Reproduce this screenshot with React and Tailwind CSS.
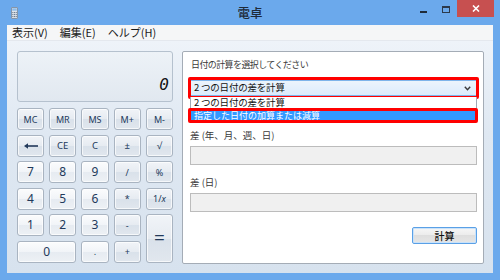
const BTN_LIGHT =
  "bg-[linear-gradient(180deg,#fbfcfd_0%,#f1f4f8_50%,#e6ebf1_50%,#edf1f5_100%)]";
const BTN_DARK =
  "bg-[linear-gradient(180deg,#f1f4f8_0%,#e6ebf1_50%,#d9e1ea_50%,#e1e7ee_100%)]";

function Key({ children, dark, className = "" }) {
  return (
    <div
      className={`flex items-center justify-center rounded-[3px] border border-[#a9b4c1] text-[#22395a] font-['Noto_Sans','Open_Sans',sans-serif] leading-none shadow-[inset_0_0_0_1px_rgba(255,255,255,0.7)] ${
        dark ? BTN_DARK : BTN_LIGHT
      } ${className}`}
    >
      {children}
    </div>
  );
}

function CalcIcon() {
  return (
    <svg width="7" height="12" viewBox="0 0 7 12">
      <rect x="0.5" y="0.5" width="6" height="11" rx="0.5" fill="#dfe4ea" stroke="#8595a8" />
      <rect x="1.2" y="1.3" width="4.6" height="2.4" fill="#8fbde9" />
      {[5, 7, 9].map((y) =>
        [1.3, 3, 4.7].map((x) => (
          <rect key={`${x}-${y}`} x={x} y={y} width="1.1" height="1.1" fill="#6d7f95" />
        ))
      )}
    </svg>
  );
}

export default function App() {
  const jp = "font-['Noto_Sans_CJK_JP','Noto_Sans',sans-serif]";
  return (
    <div className={`w-[500px] h-[280px] bg-[#6ba9ec] flex flex-col overflow-hidden ${jp}`}>
      {/* title bar */}
      <div className="h-[25px] grid grid-cols-[1fr_auto_1fr] shrink-0">
        <div className="pl-[11px] pt-[7px]">
          <CalcIcon />
        </div>
        <div className="text-[12.5px] leading-[26px] text-[#1e2a38] font-medium">電卓</div>
        <div className="flex justify-end items-start pr-[6px]">
          <div className="mt-[11px] w-[7px] h-[2px] bg-[#1f2b3a]" />
          <div className="ml-[15px] mt-[6px] w-[8px] h-[7px] border border-[#2c3a4c] border-t-2" />
          <div className="ml-[7px] w-[37px] h-[17px] bg-[#c75050] flex items-center justify-center">
            <svg width="8" height="7" viewBox="0 0 8 7">
              <path d="M1 0.5 L7 6.5 M7 0.5 L1 6.5" stroke="#ffffff" strokeWidth="1.6" />
            </svg>
          </div>
        </div>
      </div>

      <div className="flex-1 flex flex-col px-[7px] pb-[7px]">
        {/* menu bar */}
        <div className="h-[16px] bg-[#f5f6f7] border-b border-[#e4e8ee] flex items-center gap-[12px] px-[5px] text-[11px] text-[#1a1a1a] leading-none">
          <span>表示(V)</span>
          <span>編集(E)</span>
          <span>ヘルプ(H)</span>
        </div>

        {/* client */}
        <div className="flex-1 flex gap-[9px] pl-[10px] pt-[10px] pr-[9px] pb-[9px] bg-[linear-gradient(180deg,#eef3f9_0%,#dfe8f2_40%,#d7e2ee_100%)]">
          {/* calculator */}
          <div className="w-[156px] flex flex-col">
            <div className="h-[51px] rounded-[3px] border border-[#b5c1ce] bg-[linear-gradient(180deg,#edf2f7_0%,#e1e8f0_100%)] flex items-end justify-end pr-[3px] pb-[8px]">
              <span className="font-['DejaVu_Sans_Mono',monospace] text-[16px] leading-none italic text-[#111]">0</span>
            </div>
            <div className="mt-[6px] grid grid-cols-5 grid-rows-[repeat(6,22px)] gap-x-[5.2px] gap-y-[4.6px]">
              <Key dark className="text-[9px]">MC</Key>
              <Key dark className="text-[9px]">MR</Key>
              <Key dark className="text-[9px]">MS</Key>
              <Key dark className="text-[9px]">M+</Key>
              <Key dark className="text-[9px]">M-</Key>

              <Key dark>
                <svg width="14" height="6" viewBox="0 0 14 6">
                  <path d="M3 3 H14" stroke="#22395a" strokeWidth="1.6" />
                  <path d="M0 3 L4 0.2 L4 5.8 Z" fill="#22395a" />
                </svg>
              </Key>
              <Key dark className="text-[9.5px]">CE</Key>
              <Key dark className="text-[9.5px]">C</Key>
              <Key dark className="text-[9.5px]">±</Key>
              <Key dark className="text-[9.5px]">√</Key>

              <Key className="text-[12px]">7</Key>
              <Key className="text-[12px]">8</Key>
              <Key className="text-[12px]">9</Key>
              <Key dark className="text-[9px]">/</Key>
              <Key dark className="text-[9px]">%</Key>

              <Key className="text-[12px]">4</Key>
              <Key className="text-[12px]">5</Key>
              <Key className="text-[12px]">6</Key>
              <Key dark className="text-[9px]">*</Key>
              <Key dark className="text-[9px] font-['Liberation_Serif',serif]">
                1/<span className="italic">x</span>
              </Key>

              <Key className="text-[12px]">1</Key>
              <Key className="text-[12px]">2</Key>
              <Key className="text-[12px]">3</Key>
              <Key dark className="text-[9px]">-</Key>
              <Key dark className="row-span-2 text-[19px]">=</Key>

              <Key className="col-span-2 text-[12px]">0</Key>
              <Key className="text-[9px]">.</Key>
              <Key dark className="text-[9px]">+</Key>
            </div>
          </div>

          {/* date panel */}
          <div className="flex-1 bg-white border border-[#a4acb6] rounded-[2px] flex flex-col pl-[7px] pr-[6px] pt-[7px]">
            <div className="ml-[1px] h-[12px] text-[9px] leading-[12px] tracking-[-0.6px] text-[#3a3a3a]">
              日付の計算を選択してください
            </div>

            <div className="relative mt-[9px] h-[16px]">
              <div className="h-full border border-[#7eb4ea] bg-[linear-gradient(180deg,#ecf4fc_0%,#dcecfc_100%)] flex items-center pl-[3px] pr-[5px]">
                <span className="flex-1 text-[9.5px] leading-none text-[#111] tracking-[-0.2px]">2 つの日付の差を計算</span>
                <svg width="7" height="5" viewBox="0 0 7 5">
                  <path d="M0.8 0.8 L3.5 3.8 L6.2 0.8" fill="none" stroke="#3a3a3a" strokeWidth="1.4" />
                </svg>
              </div>
              <div className="absolute -left-[2px] -top-[3px] -right-[2px] -bottom-[3px] border-[3px] border-[#ff0000] rounded-[2px]" />

              {/* open list */}
              <div className="absolute left-0 right-0 top-[17px] bg-white border-x border-b border-[#a0a8b4] z-10">
                <div className="h-[12px] flex items-center pl-[3px] text-[9.5px] leading-none text-[#111] tracking-[-0.2px]">
                  2 つの日付の差を計算
                </div>
                <div className="relative h-[12px] bg-[#3399ff] flex items-center pl-[3px] text-[9px] leading-none text-white">
                  指定した日付の加算または減算
                  <div className="absolute -left-[3px] -top-[1px] -right-[2px] -bottom-[2px] border-[3px] border-[#ff0000] rounded-[2px]" />
                </div>
              </div>
            </div>

            <div className="mt-[33px] h-[12px] text-[9.5px] leading-[12px] text-[#3a3a3a]">
              差 (年、月、週、日)
            </div>
            <div className="mt-[5px] h-[19px] bg-[#f0f0f0] border border-[#bcbcbc]" />

            <div className="mt-[11px] h-[12px] text-[9.5px] leading-[12px] text-[#3a3a3a]">差 (日)</div>
            <div className="mt-[5px] h-[19px] bg-[#f0f0f0] border border-[#bcbcbc]" />

            <div className="mt-[15px] self-end w-[65px] h-[17px] border border-[#5aa0e6] rounded-[2px] bg-[linear-gradient(180deg,#f6f6f6_0%,#ebebeb_50%,#dedede_50%,#e6e6e6_100%)] shadow-[inset_0_0_0_1px_#c9e2fa] flex items-center justify-center text-[10px] leading-none text-[#111] font-medium">
              計算
            </div>
          </div>
        </div>
      </div>
    </div>
  );
}
